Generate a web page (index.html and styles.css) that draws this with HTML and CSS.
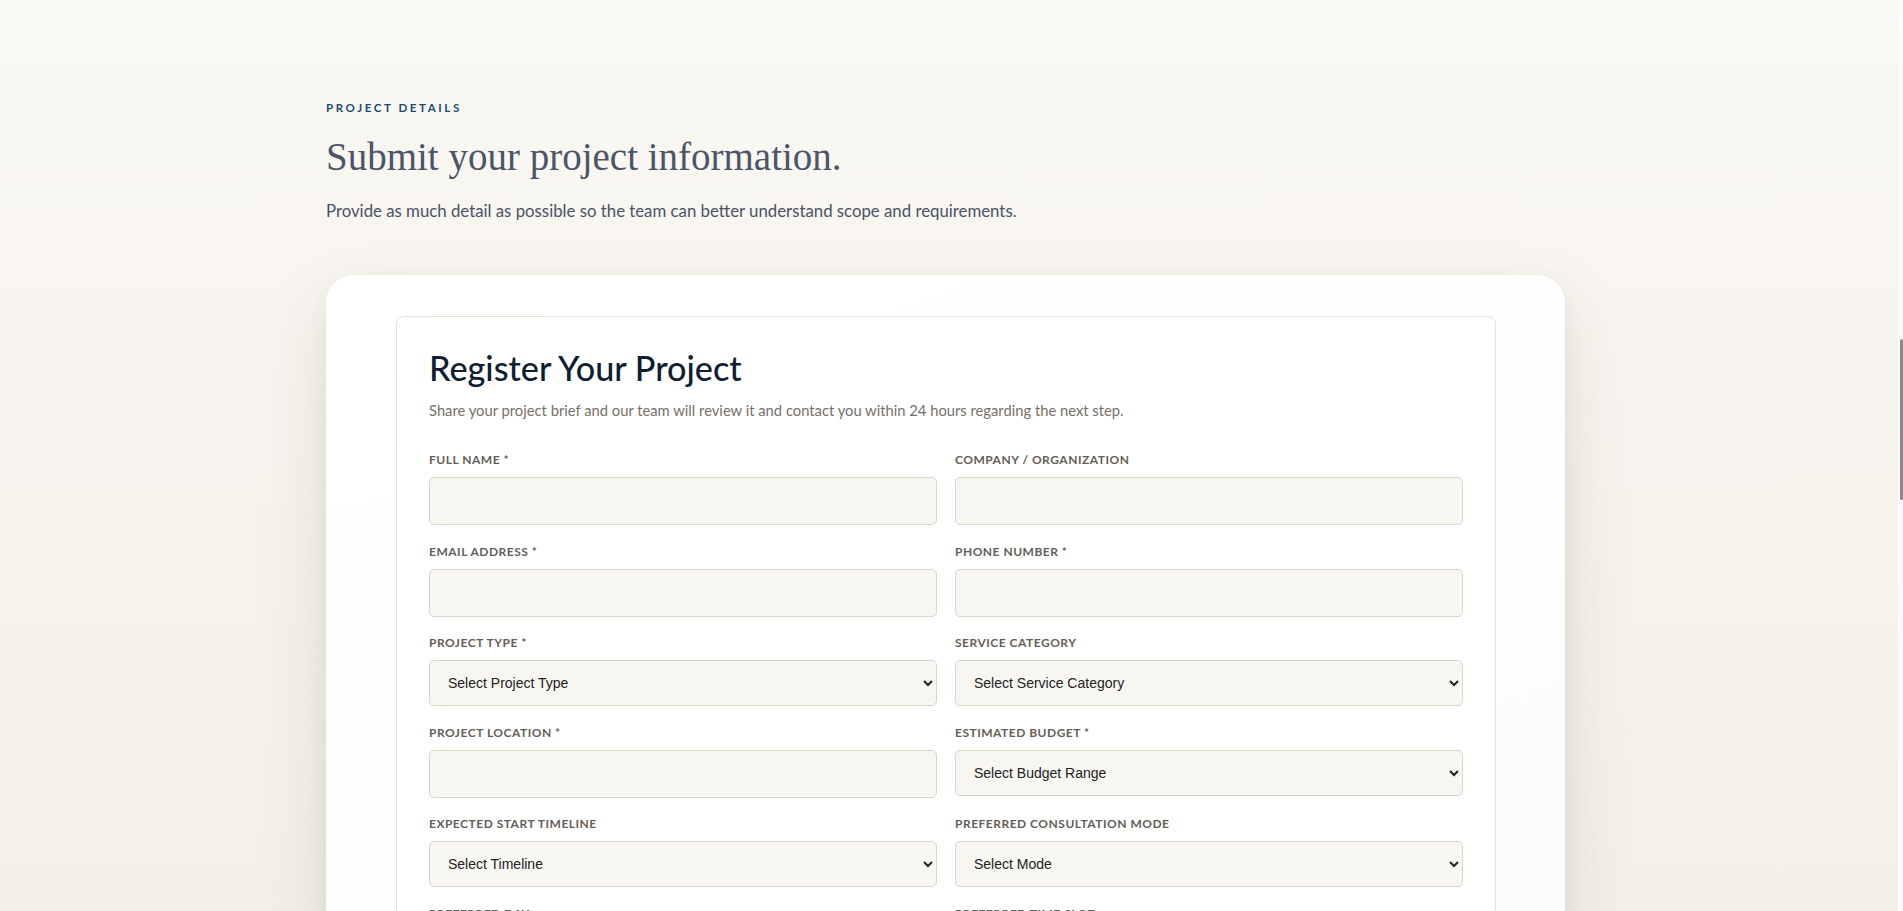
FILE: index.html
```html
<!DOCTYPE html>
<html lang="en">
<head>
<meta charset="utf-8">
<title>Project Details</title>
<link rel="stylesheet" href="styles.css">
</head>
<body>
<main class="section">
  <div class="container">
    <p class="eyebrow">PROJECT DETAILS</p>
    <h1 class="title">Submit your project information.</h1>
    <p class="lead">Provide as much detail as possible so the team can better understand scope and requirements.</p>

    <div class="shell">
      <form class="form-card">
        <h2 class="form-title">Register Your Project</h2>
        <p class="form-sub">Share your project brief and our team will review it and contact you within 24 hours regarding the next step.</p>

        <div class="grid">
          <div class="field">
            <label class="label">FULL NAME *</label>
            <input class="control" type="text">
          </div>
          <div class="field">
            <label class="label">COMPANY / ORGANIZATION</label>
            <input class="control" type="text">
          </div>
          <div class="field">
            <label class="label">EMAIL ADDRESS *</label>
            <input class="control" type="email">
          </div>
          <div class="field">
            <label class="label">PHONE NUMBER *</label>
            <input class="control" type="tel">
          </div>
          <div class="field">
            <label class="label">PROJECT TYPE *</label>
            <select class="control select"><option>Select Project Type</option></select>
          </div>
          <div class="field">
            <label class="label">SERVICE CATEGORY</label>
            <select class="control select"><option>Select Service Category</option></select>
          </div>
          <div class="field">
            <label class="label">PROJECT LOCATION *</label>
            <input class="control" type="text">
          </div>
          <div class="field">
            <label class="label">ESTIMATED BUDGET *</label>
            <select class="control select"><option>Select Budget Range</option></select>
          </div>
          <div class="field">
            <label class="label">EXPECTED START TIMELINE</label>
            <select class="control select"><option>Select Timeline</option></select>
          </div>
          <div class="field">
            <label class="label">PREFERRED CONSULTATION MODE</label>
            <select class="control select"><option>Select Mode</option></select>
          </div>
          <div class="field">
            <label class="label">PREFERRED DAY</label>
            <select class="control select"><option>Select Day</option></select>
          </div>
          <div class="field">
            <label class="label">PREFERRED TIME SLOT</label>
            <select class="control select"><option>Select Time Slot</option></select>
          </div>
        </div>
      </form>
    </div>
  </div>
</main>
<div class="scrollbar"><div class="thumb"></div></div>
</body>
</html>
```

FILE: styles.css
```css
* { box-sizing: border-box; }

html, body { height: 100%; overflow: hidden; }

body {
  margin: 0;
  padding-right: 12px;
  background: linear-gradient(180deg, #faf8f4 0%, #f6f3ed 60%, #f3f0ea 100%);
  font-family: "Lato", "Liberation Sans", sans-serif;
  color: #333;
}

.section { padding-top: 100px; }

.container {
  max-width: 1239px;
  margin: 0 auto;
}

.eyebrow {
  margin: 0;
  font-family: "Lato", sans-serif;
  font-weight: 700;
  font-size: 11.5px;
  line-height: 16px;
  letter-spacing: 2.6px;
  color: #1d4b72;
}

.title {
  margin: 19px 0 0;
  font-family: "Liberation Serif", serif;
  font-weight: 400;
  font-size: 39px;
  line-height: 43px;
  color: #4b5566;
}

.lead {
  margin: 21px 0 0;
  font-size: 16.8px;
  line-height: 24px;
  color: #4a5264;
}

.shell {
  margin-top: 52px;
  background: linear-gradient(160deg, #ffffff 0%, #fdfdfd 60%, #fafafa 100%);
  border-radius: 28px;
  padding: 41px 69px 60px 70px;
  box-shadow: 0 30px 70px rgba(70, 60, 40, 0.13), 0 6px 20px rgba(70, 60, 40, 0.05);
}

.form-card {
  background: #fff;
  border: 1px solid #e7e1d7;
  border-radius: 8px;
  padding: 31px 32px 40px;
}

.form-title {
  margin: 0;
  font-family: "Lato", sans-serif;
  font-weight: 500;
  font-size: 34.2px;
  line-height: 40px;
  color: #0f1e33;
}

.form-sub {
  margin: 11px 0 0;
  font-size: 14.75px;
  line-height: 22px;
  color: #77706a;
}

.grid {
  margin-top: 31px;
  display: grid;
  grid-template-columns: 1fr 1fr;
  column-gap: 18px;
  row-gap: 18.5px;
  align-items: start;
}

.field { display: flex; flex-direction: column; }

.label {
  font-family: "Lato", sans-serif;
  font-weight: 700;
  font-size: 12px;
  line-height: 16px;
  letter-spacing: 0.5px;
  color: #655d57;
  margin-bottom: 9px;
}

.control {
  height: 48px;
  width: 100%;
  background: #f8f6f1;
  border: 1px solid #ddd5c9;
  border-radius: 5px;
  font-family: "Liberation Sans", Arial, sans-serif;
  font-size: 14px;
  color: #222;
  padding: 0 16px;
}

.select {
  height: 46px;
  padding: 0 8px 0 14px;
}

.scrollbar {
  position: fixed;
  top: 0;
  right: 0;
  width: 5px;
  height: 100%;
  background: #fbfbfb;
}

.thumb {
  position: absolute;
  top: 339px;
  right: 0;
  width: 3px;
  height: 161px;
  border-radius: 2px;
  background: #8a8a8a;
}
```
